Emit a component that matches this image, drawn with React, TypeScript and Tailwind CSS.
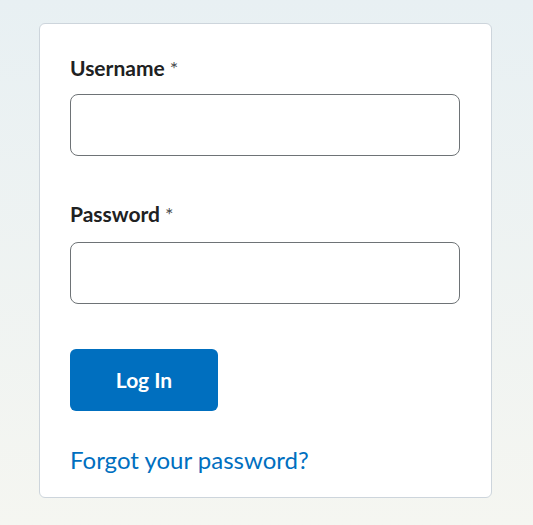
import React from "react";

export default function App() {
  return (
    <div
      className="w-[533px] h-[525px] bg-gradient-to-b from-[#e8f0f3] to-[#f5f6f1] pt-[23px] pl-[39px]"
      style={{ fontFamily: "Lato, 'Noto Sans', sans-serif" }}
    >
      <div className="w-[453px] h-[475px] bg-white border border-[#cdd5dc] rounded-[6px] px-[30px] pt-[30px] flex flex-col">
        <label className="block h-[28px] text-[21px] font-bold text-[#202122] leading-[28px]">
          Username<span className="ml-[5px] font-normal text-[20px] leading-none text-[#494c4e]">*</span>
        </label>
        <input className="mt-[12px] w-[390px] h-[62px] border border-[#6e7376] rounded-[8px] outline-none" />
        <label className="block h-[28px] mt-[44px] text-[21px] font-bold text-[#202122] leading-[28px]">
          Password<span className="ml-[5px] font-normal text-[20px] leading-none text-[#494c4e]">*</span>
        </label>
        <input type="password" className="mt-[14px] w-[390px] h-[62px] border border-[#6e7376] rounded-[8px] outline-none" />
        <button className="mt-[45px] w-[148px] h-[62px] bg-[#006fbf] rounded-[6px] text-white text-[21px] font-bold">
          Log In
        </button>
        <a className="mt-[34px] text-[24px] text-[#006fbf] leading-[30px]">Forgot your password?</a>
      </div>
    </div>
  );
}
